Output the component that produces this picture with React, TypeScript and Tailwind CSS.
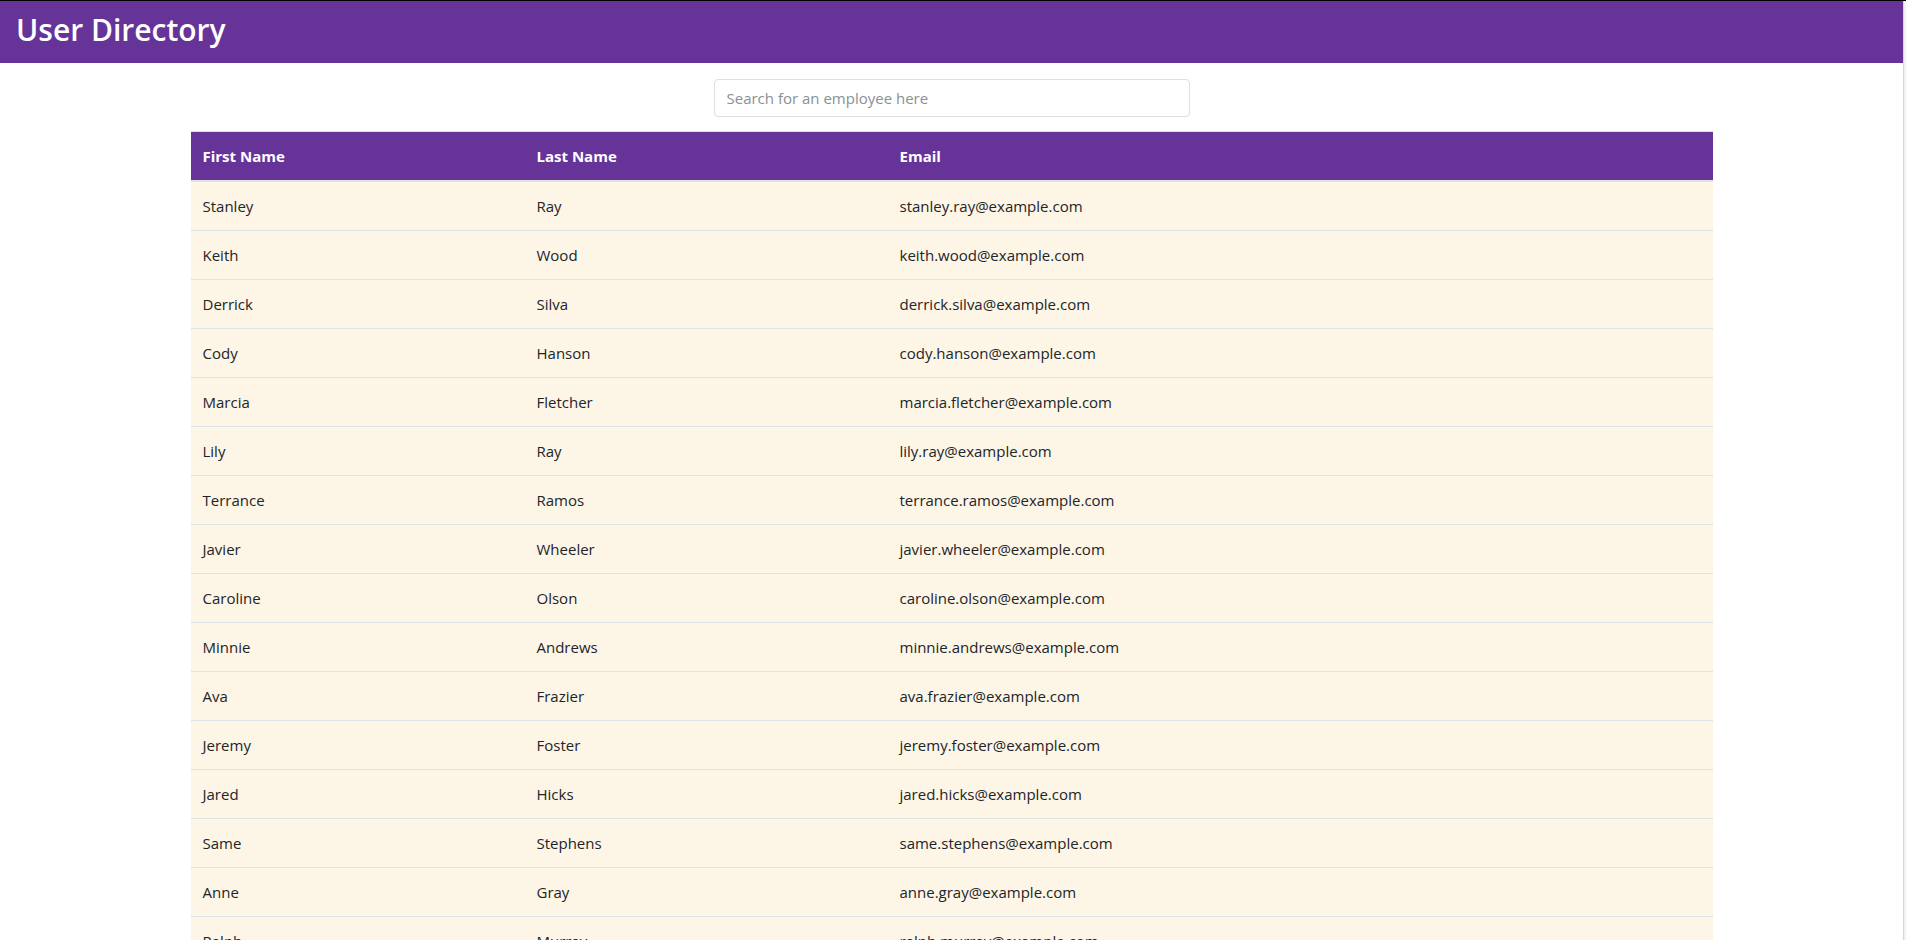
import React from "react";

interface Employee {
    first: string;
    last: string;
}

const employees: Employee[] = [
    { first: "Stanley", last: "Ray" },
    { first: "Keith", last: "Wood" },
    { first: "Derrick", last: "Silva" },
    { first: "Cody", last: "Hanson" },
    { first: "Marcia", last: "Fletcher" },
    { first: "Lily", last: "Ray" },
    { first: "Terrance", last: "Ramos" },
    { first: "Javier", last: "Wheeler" },
    { first: "Caroline", last: "Olson" },
    { first: "Minnie", last: "Andrews" },
    { first: "Ava", last: "Frazier" },
    { first: "Jeremy", last: "Foster" },
    { first: "Jared", last: "Hicks" },
    { first: "Same", last: "Stephens" },
    { first: "Anne", last: "Gray" },
    { first: "Ralph", last: "Murray" },
];

const font = { fontFamily: '"Open Sans", "Noto Sans", sans-serif' };

export default function App() {
    return (
        <div className="flex h-screen overflow-hidden border-t border-black bg-white" style={font}>
            <div className="w-[1903px] shrink-0">
                <header className="h-[62px] bg-[#663399] flex items-center px-[16px]">
                    <h1 className="text-[30px] font-semibold leading-9 text-white -mt-[4px]">User Directory</h1>
                </header>

                <div className="flex justify-center pt-4">
                    <input
                        className="w-[476px] h-[38px] px-3 text-[15px] text-[#495057] placeholder:text-[#8a9096] border border-[#dcdfe3] rounded outline-none"
                        placeholder="Search for an employee here"
                    />
                </div>

                <table className="mx-auto mt-[14px] w-[1522px] border-collapse text-[15px] text-[#212529]">
                    <thead>
                        <tr className="bg-[#663399] text-white">
                            <th className="w-[334px] px-3 py-3 leading-6 text-left font-bold border-t border-[#dee2e6] border-b-2">First Name</th>
                            <th className="w-[363px] px-3 py-3 leading-6 text-left font-bold border-t border-[#dee2e6] border-b-2">Last Name</th>
                            <th className="px-3 py-3 leading-6 text-left font-bold border-t border-[#dee2e6] border-b-2">Email</th>
                        </tr>
                    </thead>
                    <tbody>
                        {employees.map(e => (
                            <tr key={e.first + e.last} className="bg-[#fdf5e6]">
                                <td className="px-3 py-3 leading-6 border-t border-[#dee2e6]">{e.first}</td>
                                <td className="px-3 py-3 leading-6 border-t border-[#dee2e6]">{e.last}</td>
                                <td className="px-3 py-3 leading-6 border-t border-[#dee2e6]">
                                    {`${e.first.toLowerCase()}.${e.last.toLowerCase()}@example.com`}
                                </td>
                            </tr>
                        ))}
                    </tbody>
                </table>
            </div>
            <div className="w-[3px] shrink-0 bg-[#f1f1f1] border-l border-[#d6d6d6]" />
        </div>
    );
}
